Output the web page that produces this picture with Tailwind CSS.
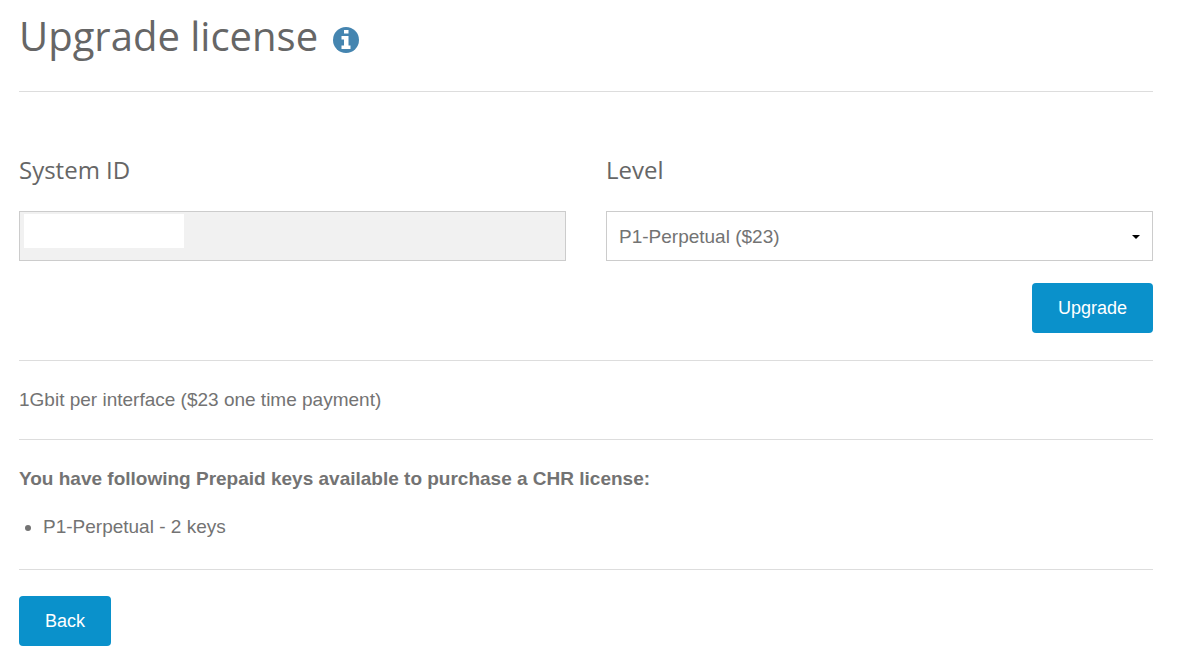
<!DOCTYPE html>
<html lang="en">
<head>
    <meta charset="UTF-8">
    <meta name="viewport" content="width=device-width, initial-scale=1.0">
    <title>Upgrade license</title>
    <script src="https://cdn.jsdelivr.net/npm/@tailwindcss/browser@4"></script>
</head>
<body class="bg-white font-['Liberation_Sans',Arial,sans-serif] text-[19px] leading-7 text-[#737373]">

    <main class="pl-[19px] pr-6 pt-2">

        <!-- Page title -->
        <header class="flex items-center gap-[15px] border-b border-[#dddddd] pb-[27px]">
            <h1 class="font-['Open_Sans',sans-serif] text-[40px] font-normal leading-[56px] text-[#666666]">Upgrade license</h1>
            <svg class="mt-2 size-[26px]" viewBox="0 0 26 26" role="img" aria-label="Information">
                <circle cx="13" cy="13" r="13" fill="#4585b0" />
                <path fill="#fff" d="M11 3h4.500v3.500H11zM8.500 9h7v9.500h2V22h-9v-3.500h2.500v-6H8.500z" />
            </svg>
        </header>

        <!-- Upgrade form -->
        <form id="upgradeForm" class="border-b border-[#dddddd] pb-[27px] pt-[60px]">
            <div class="grid grid-cols-2 gap-10">
                <div>
                    <label for="systemId" class="block font-['Open_Sans',sans-serif] text-2xl leading-9 text-[#666666]">System ID</label>
                    <div class="relative mt-[23px]">
                        <input id="systemId" name="system_id" type="text" readonly class="block h-[50px] w-full border border-[#cccccc] bg-[#f1f1f1] px-3">
                        <span class="absolute left-[5px] top-[3px] h-[34px] w-40 bg-white"></span>
                    </div>
                </div>
                <div>
                    <label for="level" class="block font-['Open_Sans',sans-serif] text-2xl leading-9 text-[#666666]">Level</label>
                    <div class="relative mt-[23px]">
                        <select id="level" name="level" class="block h-[50px] w-full appearance-none border border-[#cccccc] bg-white px-3 pt-px">
                            <option>P1-Perpetual ($23)</option>
                        </select>
                        <svg class="pointer-events-none absolute right-[13px] top-6 h-1 w-2" viewBox="0 0 8 4" fill="#000">
                            <path d="M0 0h8L4 4z" />
                        </svg>
                    </div>
                </div>
            </div>
            <div class="mt-[22px] flex justify-end">
                <button type="submit" class="h-[50px] rounded bg-[#0a91cb] px-[26px] text-lg text-white">Upgrade</button>
            </div>
        </form>

        <p class="border-b border-[#dddddd] py-[25px]">1Gbit per interface ($23 one time payment)</p>

        <!-- Prepaid keys -->
        <section class="border-b border-[#dddddd] pb-7 pt-[25px]">
            <p class="font-bold">You have following Prepaid keys available to purchase a CHR license:</p>
            <ul class="mt-5 list-disc pl-6">
                <li>P1-Perpetual - 2 keys</li>
            </ul>
        </section>

        <button type="button" class="mt-[26px] h-[50px] rounded bg-[#0a91cb] px-[26px] text-lg text-white">Back</button>
    </main>

</body>
</html>
